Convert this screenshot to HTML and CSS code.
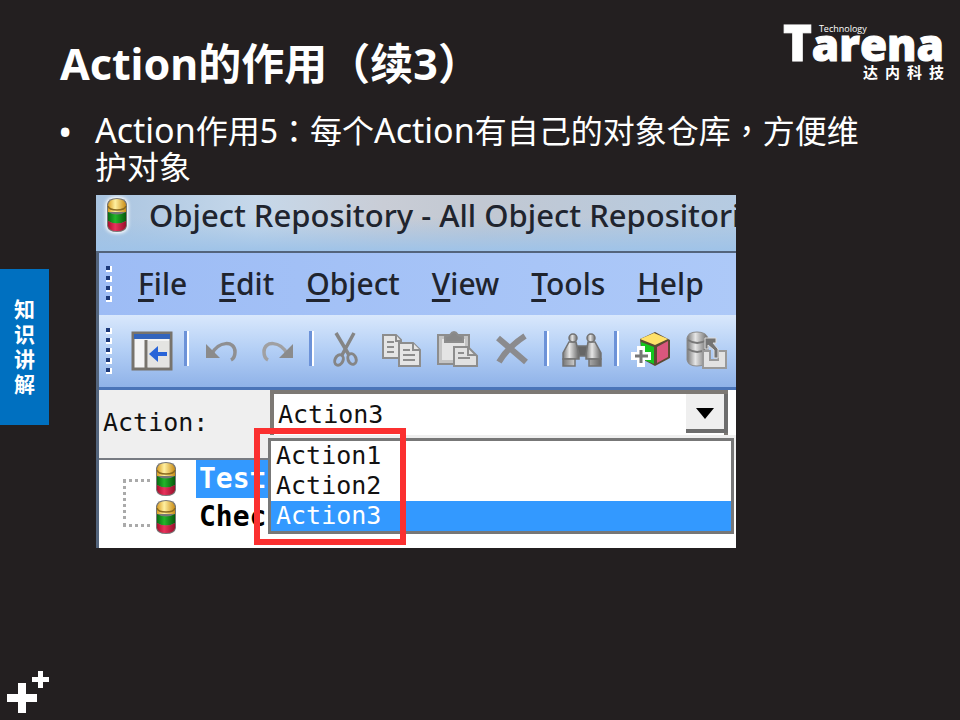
FILE: index.html
```html
<!DOCTYPE html>
<html lang="zh-CN">
<head>
<meta charset="utf-8">
<meta name="viewport" content="width=device-width, initial-scale=1">
<title>Action的作用（续3）</title>
<link rel="stylesheet" href="styles.css">
</head>
<body>
<svg class="symbols" aria-hidden="true">
  <defs>
    <linearGradient id="gold" x2="1"><stop offset="0" stop-color="#d99c20"/><stop offset=".4" stop-color="#fff0a0"/><stop offset="1" stop-color="#c98b14"/></linearGradient>
    <linearGradient id="green" x2="1"><stop offset="0" stop-color="#0a6b12"/><stop offset=".4" stop-color="#22b52a"/><stop offset="1" stop-color="#075a0c"/></linearGradient>
    <linearGradient id="red" x2="1"><stop offset="0" stop-color="#a80f2c"/><stop offset=".4" stop-color="#e8325c"/><stop offset="1" stop-color="#98102a"/></linearGradient>
    <linearGradient id="steel" x2="1"><stop offset="0" stop-color="#777"/><stop offset=".4" stop-color="#e6e6e6"/><stop offset="1" stop-color="#666"/></linearGradient>
    <symbol id="db" viewBox="0 0 24 36">
      <path d="M2 7Q3 1 12 1T22 7V29Q21 35 12 35T2 29Z" fill="#777"/>
      <path d="M3 8Q4 2 12 2T21 8V15H3Z" fill="url(#gold)"/>
      <path d="M3 15Q12 20 21 15V24Q12 29 3 24Z" fill="url(#green)"/>
      <path d="M3 24Q12 29 21 24V29Q20 34 12 34T3 29Z" fill="url(#red)"/>
      <path d="M3 9Q4 13 12 13T21 9" fill="none" stroke="#8a6a20" stroke-width="1.5"/>
    </symbol>
  </defs>
</svg>
<div class="slide">
  <aside class="rail">
    <p class="tab"><span>知</span><span>识</span><span>讲</span><span>解</span></p>
    <svg class="pluses" viewBox="0 0 49 50" aria-hidden="true"><path d="M7 24H18V13H26V24H37V32H26V43H18V32H7ZM32 7H38V1H43V7H49V12H43V18H38V12H32Z" fill="#fff"/></svg>
  </aside>
  <main class="content">
    <header class="heading">
      <h1>Action的作用（续3）</h1>
      <div class="brand">
        <div class="wordmark"><span class="initial">T</span>arena<span class="tagline">Technology</span></div>
        <div class="brand-cn"><span>达</span><span>内</span><span>科</span><span>技</span></div>
      </div>
    </header>
    <ul class="points">
      <li><span class="latin">Action</span>作用5<span class="mark" lang="zh-TW">：</span>每个<span class="latin">Action</span>有自己的对象仓库<span class="mark" lang="zh-TW">，</span>方便维护对象</li>
    </ul>
    <section class="window" lang="en">
      <div class="titlebar"><svg class="db" aria-hidden="true"><use href="#db"/></svg><span>Object Repository - All Object Repositori</span></div>
      <div class="frame">
        <nav class="menubar">
          <span class="grip"><i></i><i></i><i></i><i></i></span>
          <button><u>F</u>ile</button><button><u>E</u>dit</button><button><u>O</u>bject</button><button><u>V</u>iew</button><button><u>T</u>ools</button><button><u>H</u>elp</button>
        </nav>
        <div class="toolbar">
          <span class="grip"><i></i><i></i><i></i><i></i><i></i></span>
          <button aria-label="Toggle panel"><svg viewBox="0 0 44 44"><path d="M3 4H41V40H3Z" fill="#f4f4f4" stroke="#77736c" stroke-width="3"/><path d="M4 5H40V10H4Z" fill="#3264bc"/><path d="M16 11V39" stroke="#77736c" stroke-width="3"/><path d="M18 12H39V38H18Z" fill="#e4e4e2"/><path d="M19 25 28 17V23H37V27H28V33Z" fill="#2864d8"/></svg></button>
          <span class="sep"></span>
          <button aria-label="Undo"><svg viewBox="0 0 44 44"><path d="M12 25C18 12 35 11 35 23Q35 29 31 31" fill="none" stroke="#8f8f91" stroke-width="3.5"/><path d="M6 15V29H20Z" fill="#8b8b8b"/></svg></button>
          <button aria-label="Redo"><svg viewBox="0 0 44 44"><path d="M32 25C26 12 9 11 9 23Q9 29 13 31" fill="none" stroke="#a0a0a2" stroke-width="3.5"/><path d="M38 15V29H24Z" fill="#8b8b8b"/></svg></button>
          <span class="sep"></span>
          <button aria-label="Cut"><svg viewBox="0 0 44 44"><g fill="none" stroke="#858585"><path d="M11 4 24 26M29 4 17 26" stroke-width="3.5"/><ellipse cx="14" cy="31" rx="4" ry="5.500" stroke-width="3" transform="rotate(25 14 31)"/><ellipse cx="27" cy="30" rx="4" ry="5.500" stroke-width="3" transform="rotate(-20 27 30)"/></g></svg></button>
          <button aria-label="Copy"><svg viewBox="0 0 44 44"><g fill="#e5e5e5" stroke="#8d8d8d" stroke-width="2"><path d="M3 6H16L21 11V29H3Z"/><path d="M16 6V12H21M7 13H14M7 18H14M7 23H14"/><path d="M19 14H33L40 21V37H19Z"/><path d="M33 14V21H40M23 21H30M23 26H35M23 31H35"/></g></svg></button>
          <button aria-label="Paste"><svg viewBox="0 0 44 44"><g stroke="#8d8d8d" stroke-width="2"><path d="M3 6H34V35H3Z" fill="#c4c4c4"/><path d="M7 10H30V31H7Z" fill="#e4e4e4" stroke="none"/><path d="M10 13V8L15 6Q19 0 23 6L28 8V13Z" fill="#888"/><path d="M19 18H33L42 27V37H19Z" fill="#e1e1e1"/><path d="M33 18V26H41M23 24H29M23 29H35" fill="none"/></g></svg></button>
          <button aria-label="Delete"><svg viewBox="0 0 44 44"><path d="M8 9 36 33M35 7Q18 18 9 33" fill="none" stroke="#8b8b8e" stroke-width="6"/></svg></button>
          <span class="sep"></span>
          <button aria-label="Find"><svg viewBox="0 0 44 44"><g fill="url(#steel)" stroke="#737373" stroke-width="1.500"><path d="M17 17H28V27H17Z" fill="#666"/><path d="M9 13H16L19 25V30H3V24Z"/><path d="M28 13H35L41 24V30H26V25Z"/><path d="M3 30H15V37H3ZM29 30H41V37H29Z"/><circle cx="13" cy="9" r="4"/><circle cx="31" cy="9" r="4"/></g></svg></button>
          <span class="sep"></span>
          <button aria-label="Add object"><svg viewBox="0 0 44 44"><path d="M10 10 25 3 40 11V29L25 37 12 30Z" fill="#5b4a32"/><path d="M10 10 24 4 38 10 25 16Z" fill="#ffe169"/><path d="M11 13 24 18V35L12 30Z" fill="#16c51e"/><path d="M27 18 38 12V28L27 34Z" fill="#d9577d"/><path d="M7 17H15V23H21V31H15V38H7V31H1V23H7Z" fill="#fff"/><path d="M11 21V34M5 27H18" stroke="#777" stroke-width="3"/></svg></button>
          <button aria-label="Update from repository"><svg viewBox="0 0 44 44"><path d="M2 9Q3 3 12 3T23 9V31Q21 37 12 37T2 31Z" fill="url(#steel)" stroke="#8d8d8d"/><path d="M3 11Q12 17 22 11M3 20Q12 26 22 20" fill="none" stroke="#777" stroke-width="2"/><path d="M18 22H25V31H33V22H41V39H18Z" fill="#e2e2e2" stroke="#999" stroke-width="2"/><path d="M20 9H31V14H28L33 20V29H29V21L23 16V20H20Z" fill="#747474" stroke="#ddd"/></svg></button>
        </div>
        <div class="picker">
          <label for="action">Action:</label>
          <div class="combo">
            <select id="action"><option>Action1</option><option>Action2</option><option selected>Action3</option></select>
            <span class="arrow" aria-hidden="true"></span>
            <ul class="options" role="listbox" aria-label="Action"><li role="option">Action1</li><li role="option">Action2</li><li role="option" aria-selected="true">Action3</li></ul>
            <span class="highlight" aria-hidden="true"></span>
          </div>
        </div>
        <ul class="tree">
          <li class="selected"><svg class="db" aria-hidden="true"><use href="#db"/></svg><span>Test</span></li>
          <li><svg class="db" aria-hidden="true"><use href="#db"/></svg><span>Chec</span></li>
        </ul>
      </div>
    </section>
  </main>
</div>
</body>
</html>
```
FILE: styles.css
```css
* { box-sizing: border-box; }
body {
  margin: 0;
  background: #231f20;
  color: #fff;
  font-family: "Noto Sans", "Noto Sans CJK SC", sans-serif;
}
h1, p, ul { margin: 0; padding: 0; }
ul { list-style: none; }
button { margin: 0; padding: 0; border: 0; background: none; color: inherit; font: inherit; }
.symbols { position: absolute; width: 0; height: 0; }

.slide { display: grid; grid-template-columns: 49px minmax(0, 1fr); min-height: 100vh; }
.rail { display: flex; flex-direction: column; justify-content: space-between; padding-top: 269px; }
.tab {
  display: flex;
  flex-direction: column;
  align-items: center;
  padding: 28px 0;
  background: #0070c0;
  font-size: 21px;
  font-weight: 700;
  line-height: 25px;
}
.pluses { width: 49px; height: 50px; }

.content { padding: 24px 16px 24px 11px; }
.heading { display: flex; justify-content: space-between; align-items: flex-start; height: 87px; }
h1 { padding-top: 12px; font-size: 43px; line-height: 56px; font-weight: 700; }
.brand { display: flex; flex-direction: column; align-items: flex-end; }
.wordmark {
  position: relative;
  height: 40px;
  font-family: "Open Sans", sans-serif;
  font-size: 44px;
  font-weight: 800;
  line-height: 36px;
  white-space: nowrap;
  -webkit-text-stroke: 1px #fff;
}
.initial { font-size: 49px; line-height: 36px; }
.tagline { position: absolute; top: 0; left: 36px; font-size: 9px; font-weight: 400; line-height: 10px; -webkit-text-stroke: 0; }
.brand-cn { display: flex; gap: 7px; font-size: 15px; font-weight: 700; line-height: 16px; }

.points { font-size: 32px; line-height: 36px; }
.points li { position: relative; max-width: 812px; padding: 2px 0 10px 35px; }
.points li::before { content: "•"; position: absolute; left: -2px; font-size: 38px; }
.latin { font-size: 34px; line-height: 1; }
.mark { font-family: "Noto Sans CJK TC", sans-serif; line-height: 1; }

.window { max-width: 640px; margin-left: 36px; overflow: hidden; background: #fff; color: #20242e; }
.titlebar {
  display: flex;
  gap: 20px;
  height: 56px;
  padding-left: 9px;
  background: linear-gradient(#fff0 40%, #9fc3e8), linear-gradient(90deg, #a9c4e0, #c6d8ea 25%, #c9cdd6 45%, #c2c8d2 60%, #b5cbe2);
  font-size: 31px;
  line-height: 40px;
  font-weight: 500;
  white-space: nowrap;
}
.titlebar .db { margin-top: 2px; }
.db { flex: none; width: 24px; height: 36px; }
.titlebar .db { filter: drop-shadow(0 0 2px #fff) drop-shadow(0 0 1px #fff); }
.frame { border-top: 2px solid #53647c; border-left: 3px solid #53647c; }
.menubar { display: flex; align-items: center; gap: 32px; height: 62px; padding-left: 7px; background: linear-gradient(90deg, #9dbcf5, #adc9f8); font-size: 30px; font-weight: 500; white-space: nowrap; }
.menubar .grip { margin-right: -8px; }
.menubar button { line-height: 40px; }
u { text-decoration-thickness: 3px; text-underline-offset: 4px; text-decoration-skip-ink: none; }
.grip { display: flex; flex: none; flex-direction: column; gap: 4px; width: 8px; }
.grip i { width: 6px; height: 6px; border: solid #fff; border-width: 0 2px 2px 0; background: #1d3a7a; }
.toolbar { display: flex; align-items: center; height: 75px; padding-left: 7px; border-bottom: 3px solid #4a74b8; background: linear-gradient(#d9e8fc, #b2cef5 50%, #8fb2e8); }
.toolbar .grip { margin-right: 10px; }
.toolbar button { display: flex; flex: none; justify-content: center; width: 55px; }
.toolbar svg { width: 44px; height: 44px; }
.sep { flex: none; width: 15px; height: 35px; margin-top: -6px; background: linear-gradient(90deg, #0000 5px, #6c92d8 5px 8px, #fff 8px 10px, #0000 10px); }

.picker { display: flex; height: 70px; background: #efefef; font: 25px/30px "DejaVu Sans Mono", monospace; color: #111; }
.picker label { flex: none; width: 171px; padding: 18px 0 0 4px; border-bottom: 2px solid #777b82; }
.combo { position: relative; flex: 1; height: 45px; background: #fff; }
.combo select {
  appearance: none;
  width: calc(100% - 8px);
  height: 45px;
  padding: 0 4px;
  border: solid #7d7974;
  border-width: 4px 4px 0 4px;
  border-radius: 0;
  background: #fff;
  color: inherit;
  font: inherit;
}
.arrow { position: absolute; top: 4px; right: 8px; width: 42px; height: 39px; border: solid #6d6d6d; border-width: 0 4px 4px 0; background: #efefef; pointer-events: none; }
.arrow::after { content: ""; position: absolute; top: 14px; left: 10px; border: 9px solid #0000; border-top: 11px solid #000; border-bottom: 0; }
.options { position: absolute; z-index: 1; top: 48px; left: -2px; right: 2px; border: 3px solid #777; background: #fff; }
.options li { padding-left: 5px; }
.options [aria-selected="true"] { background: #3399ff; color: #fff; }
.highlight { position: absolute; z-index: 2; top: 38px; left: -16px; width: 152px; height: 117px; border: 6px solid #fb3030; }
.tree { position: relative; height: 88px; padding-left: 55px; background: #fff; font: 700 28px/38px "DejaVu Sans Mono", monospace; color: #000; }
.tree::before { content: ""; position: absolute; top: 19px; left: 24px; width: 24px; height: 42px; border: dotted #aaa; border-width: 3px 0 3px 3px; }
.tree li { display: flex; gap: 18px; height: 38px; align-items: center; }
.tree span { width: 80px; padding-left: 3px; }
.tree .selected span { background: #3399ff; color: #fff; }
```
